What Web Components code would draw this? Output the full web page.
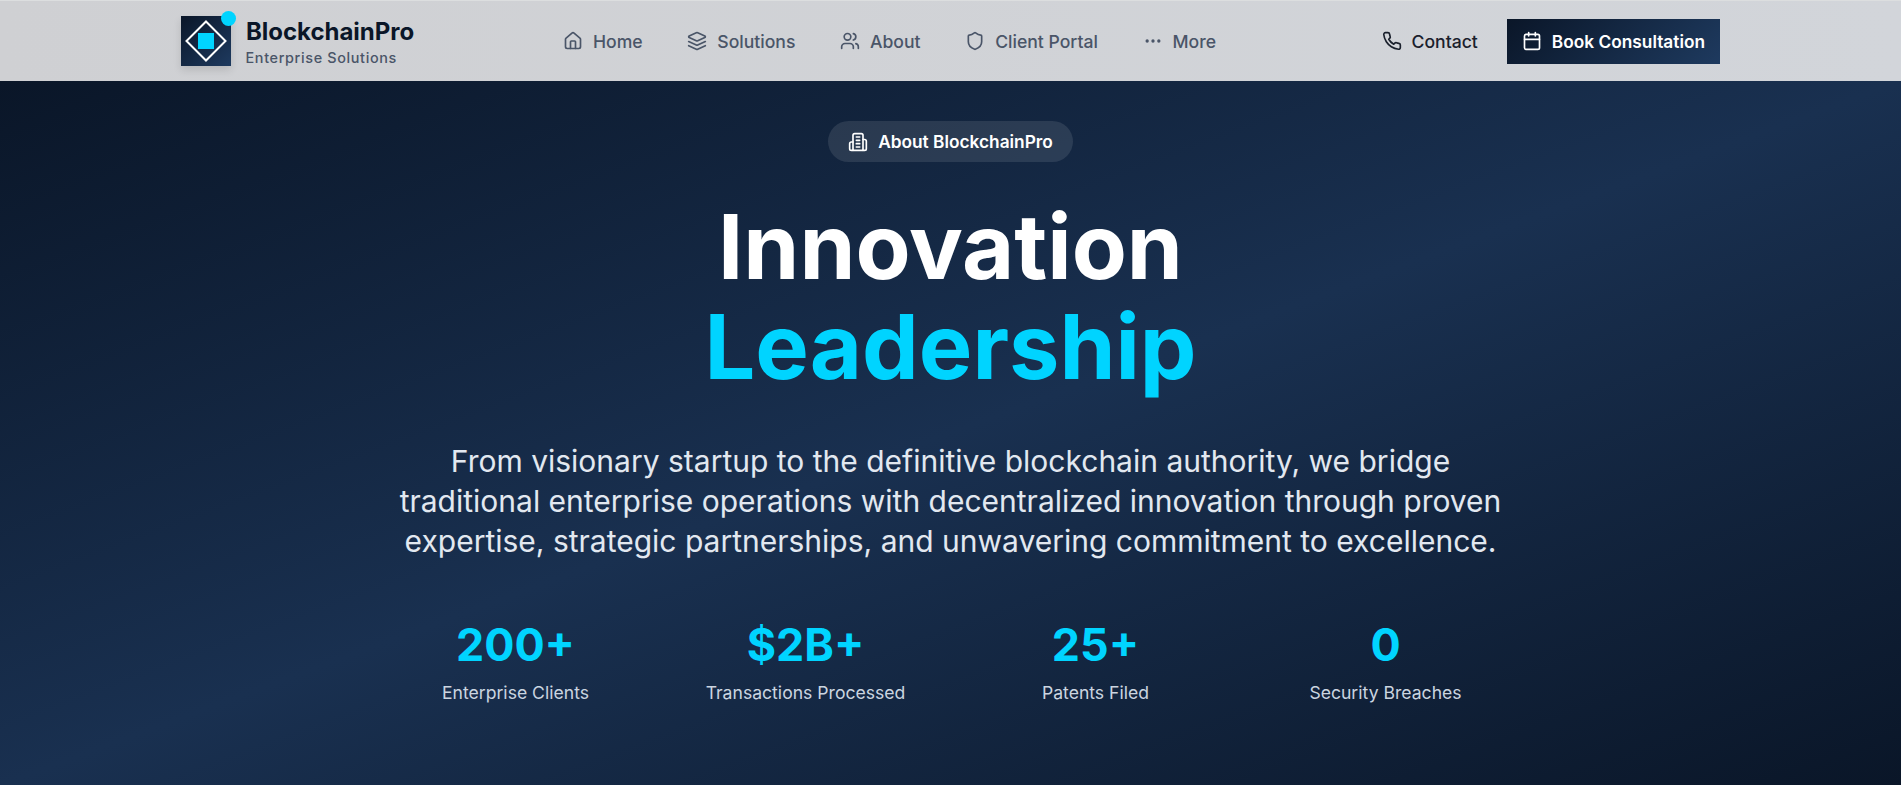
<!DOCTYPE html>
<html lang="en"><head><meta charset="utf-8"><title>BlockchainPro</title>
<style>
html,body{margin:0;padding:0;height:785px;overflow:hidden;font-family:Inter,"Liberation Sans",sans-serif}
body{display:flex;flex-direction:column;background:#0a1628}
</style></head><body>
<site-header></site-header>
<hero-section>
  <hero-badge>About BlockchainPro</hero-badge>
  <span slot="l1">Innovation</span>
  <span slot="l2">Leadership</span>
  <span slot="lead">From visionary startup to the definitive blockchain authority, we bridge traditional enterprise operations with decentralized innovation through proven expertise, strategic partnerships, and unwavering commitment to excellence.</span>
  <hero-stat value="200+" label="Enterprise Clients" slot="stats"></hero-stat>
  <hero-stat value="$2B+" label="Transactions Processed" slot="stats"></hero-stat>
  <hero-stat value="25+" label="Patents Filed" slot="stats"></hero-stat>
  <hero-stat value="0" label="Security Breaches" slot="stats"></hero-stat>
</hero-section>
<script>
const svg=(p,s=20)=>`<svg width="${s}" height="${s}" viewBox="0 0 24 24" fill="none" stroke="currentColor" stroke-width="2" stroke-linecap="round" stroke-linejoin="round">${p}</svg>`;
const I={
home:'<path d="M15 21v-8a1 1 0 0 0-1-1h-4a1 1 0 0 0-1 1v8"/><path d="M3 10a2 2 0 0 1 .709-1.528l7-5.999a2 2 0 0 1 2.582 0l7 5.999A2 2 0 0 1 21 10v9a2 2 0 0 1-2 2H5a2 2 0 0 1-2-2z"/>',
layers:'<path d="m12.83 2.18a2 2 0 0 0-1.66 0L2.6 6.08a1 1 0 0 0 0 1.83l8.58 3.91a2 2 0 0 0 1.66 0l8.58-3.9a1 1 0 0 0 0-1.83Z"/><path d="m22 17.65-9.17 4.16a2 2 0 0 1-1.66 0L2 17.65"/><path d="m22 12.65-9.17 4.16a2 2 0 0 1-1.66 0L2 12.65"/>',
users:'<path d="M16 21v-2a4 4 0 0 0-4-4H6a4 4 0 0 0-4 4v2"/><circle cx="9" cy="7" r="4"/><path d="M22 21v-2a4 4 0 0 0-3-3.87"/><path d="M16 3.13a4 4 0 0 1 0 7.75"/>',
shield:'<path d="M20 13c0 5-3.5 7.5-7.66 8.95a1 1 0 0 1-.67-.01C7.5 20.5 4 18 4 13V6a1 1 0 0 1 1-1c2 0 4.5-1.2 6.24-2.72a1.17 1.17 0 0 1 1.52 0C14.51 3.81 17 5 19 5a1 1 0 0 1 1 1z"/>',
more:'<circle cx="12" cy="12" r="1"/><circle cx="19" cy="12" r="1"/><circle cx="5" cy="12" r="1"/>',
phone:'<path d="M22 16.92v3a2 2 0 0 1-2.18 2 19.79 19.79 0 0 1-8.63-3.07 19.5 19.5 0 0 1-6-6 19.79 19.79 0 0 1-3.07-8.67A2 2 0 0 1 4.11 2h3a2 2 0 0 1 2 1.72 12.84 12.84 0 0 0 .7 2.81 2 2 0 0 1-.45 2.11L8.09 9.91a16 16 0 0 0 6 6l1.27-1.27a2 2 0 0 1 2.11-.45 12.84 12.84 0 0 0 2.81.7A2 2 0 0 1 22 16.92z"/>',
calendar:'<path d="M8 2v4"/><path d="M16 2v4"/><rect width="18" height="18" x="3" y="4" rx="2"/><path d="M3 10h18"/>',
building:'<path d="M6 22V4a2 2 0 0 1 2-2h8a2 2 0 0 1 2 2v18Z"/><path d="M6 12H4a2 2 0 0 0-2 2v6a2 2 0 0 0 2 2h2"/><path d="M18 9h2a2 2 0 0 1 2 2v9a2 2 0 0 1-2 2h-2"/><path d="M10 6h4"/><path d="M10 10h4"/><path d="M10 14h4"/><path d="M10 18h4"/>'
};
class BrandLogo extends HTMLElement{constructor(){super();this.attachShadow({mode:'open'}).innerHTML=`<style>
:host{display:block;position:relative;width:50px;height:50px;background:linear-gradient(135deg,#0a1628,#1e3a5f);box-shadow:0 4px 8px rgba(0,0,0,.12)}
svg{display:block}
i{position:absolute;top:-5px;right:-5px;width:15px;height:15px;border-radius:50%;background:#00d4ff}
</style><svg width="50" height="50" viewBox="0 0 50 50"><path d="M25 5.5 L44.5 25 L25 44.5 L5.5 25 Z" fill="none" stroke="#fff" stroke-width="2"/><rect x="17" y="17" width="16" height="16" fill="#00d4ff"/></svg><i></i>`}}
customElements.define('brand-logo',BrandLogo);
class NavLink extends HTMLElement{constructor(){super();this.attachShadow({mode:'open'}).innerHTML=`<style>
:host{display:flex;align-items:center;gap:10px;font-size:17.6px;font-weight:500;color:var(--c,#4a5568);white-space:nowrap}
svg{display:block;flex:none}
</style><span id="i"></span><slot></slot>`}
connectedCallback(){const s=this.shadowRoot.getElementById('i');s.innerHTML=svg(I[this.getAttribute('icon')],this.getAttribute('size')||20);s.style.display='contents'}}
customElements.define('nav-link',NavLink);
class SiteHeader extends HTMLElement{constructor(){super();this.attachShadow({mode:'open'}).innerHTML=`<style>
:host{display:flex;align-items:center;height:81px;box-sizing:border-box;padding:0 181px;background:linear-gradient(90deg,#cfd0d3,#d2d5da);border-top:1px solid #dcdedf;flex:none}
.brand{display:flex;align-items:center;gap:15px;width:382px;flex:none}
.t{display:flex;flex-direction:column;margin-top:4px}
b{font-size:24px;font-weight:700;color:#0a1628;line-height:30px;letter-spacing:-.03px}
small{font-size:14.4px;font-weight:500;color:#4a5568;line-height:22px;letter-spacing:.65px;margin-left:-.5px}
nav{display:flex;gap:44.6px;flex:1}
.r{display:flex;align-items:center;gap:29px}
.cta{display:flex;align-items:center;gap:10px;height:45px;padding:0 15px;background:linear-gradient(135deg,#0a1628,#1e3a5f);color:#fff;font-size:17.3px;font-weight:600}
.contact{--c:#1a202c}
svg{display:block}
</style>
<div class="brand"><brand-logo></brand-logo><div class="t"><b>BlockchainPro</b><small>Enterprise Solutions</small></div></div>
<nav><nav-link icon="home">Home</nav-link><nav-link icon="layers">Solutions</nav-link><nav-link icon="users">About</nav-link><nav-link icon="shield">Client Portal</nav-link><nav-link icon="more">More</nav-link></nav>
<div class="r"><nav-link class="contact" icon="phone">Contact</nav-link><div class="cta">${svg(I.calendar)}<span>Book Consultation</span></div></div>`}}
customElements.define('site-header',SiteHeader);
class HeroBadge extends HTMLElement{constructor(){super();this.attachShadow({mode:'open'}).innerHTML=`<style>
:host{display:inline-flex;align-items:center;gap:10px;height:41px;padding:0 20px;border-radius:21px;background:rgba(255,255,255,.1);color:#fff;font-size:17.3px;font-weight:600;white-space:nowrap}
svg{display:block}
</style>${svg(I.building)}<slot></slot>`}}
customElements.define('hero-badge',HeroBadge);
class HeroStat extends HTMLElement{constructor(){super();this.attachShadow({mode:'open'}).innerHTML=`<style>
:host{display:flex;flex-direction:column;align-items:center;text-align:center}
.v{font-size:44.8px;font-weight:700;color:#00d4ff;line-height:56px}
.l{font-size:17.6px;font-weight:400;color:#cbd5e0;line-height:24px;margin-top:8px;white-space:nowrap}
</style><div class="v"></div><div class="l"></div>`}
connectedCallback(){this.shadowRoot.querySelector('.v').textContent=this.getAttribute('value');this.shadowRoot.querySelector('.l').textContent=this.getAttribute('label')}}
customElements.define('hero-stat',HeroStat);
class HeroSection extends HTMLElement{constructor(){super();this.attachShadow({mode:'open'}).innerHTML=`<style>
:host{display:flex;flex-direction:column;align-items:center;flex:1;padding-top:40px;box-sizing:border-box;background:linear-gradient(to bottom right,#0a1628 0%,#193050 50%,#0a1628 100%);color:#fff;overflow:hidden}
h1{margin:35px 0 0;font-size:90px;font-weight:700;line-height:100px;text-align:center}
h1 span{display:block}
.c{color:#00d4ff}
p{margin:44px 0 0;width:1120px;text-align:center;font-size:30px;line-height:40px;color:#e2e8f0}
.s{display:grid;grid-template-columns:repeat(4,290px);gap:0;margin-top:56px}
</style><slot></slot><h1><span><slot name="l1"></slot></span><span class="c"><slot name="l2"></slot></span></h1><p><slot name="lead"></slot></p><div class="s"><slot name="stats"></slot></div>`}}
customElements.define('hero-section',HeroSection);
</script>
</body></html>
